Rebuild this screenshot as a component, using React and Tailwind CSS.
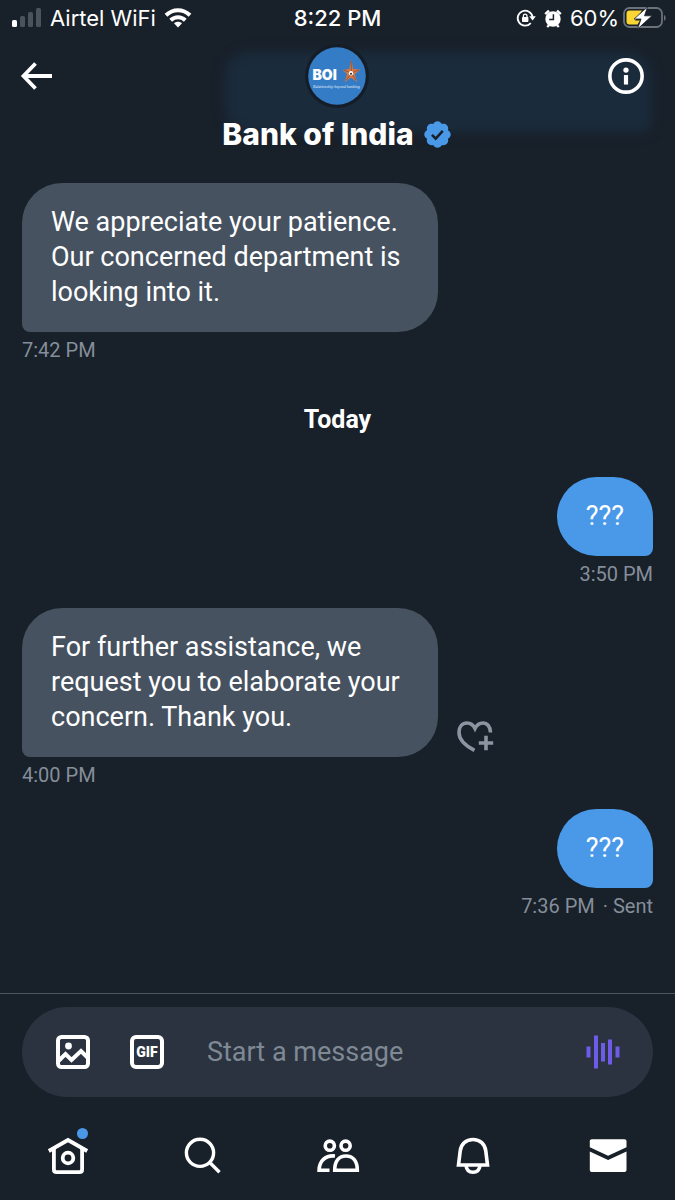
import React, { useState } from "react";

const MESSAGES = [
  { id: 1, from: "them", text: "We appreciate your patience. Our concerned department is looking into it.", time: "7:42 PM" },
  { id: 2, day: "Today" },
  { id: 3, from: "me", text: "???", time: "3:50 PM" },
  { id: 4, from: "them", text: "For further assistance, we request you to elaborate your concern. Thank you.", time: "4:00 PM", react: true },
  { id: 5, from: "me", text: "???", time: "7:36 PM", status: "Sent" },
];

const TABS = [
  { name: "Home", icon: HomeIcon, badge: true },
  { name: "Search", icon: SearchIcon },
  { name: "Communities", icon: PeopleIcon },
  { name: "Notifications", icon: BellIcon },
  { name: "Messages", icon: MailIcon },
];

export default function App() {
  return (
    <div className="min-h-screen flex flex-col bg-[#18202a] text-white font-[Roboto,sans-serif]">
      <StatusBar />
      <ChatHeader />
      <main className="flex-1 flex flex-col px-[22px] pt-[18px] pb-4">
        {MESSAGES.map((m) =>
          m.day ? (
            <h2 key={m.id} className="text-center text-[25px] leading-8 font-bold mt-5 mb-[41px]">{m.day}</h2>
          ) : (
            <Message key={m.id} message={m} />
          )
        )}
      </main>
      <Composer />
      <TabBar />
    </div>
  );
}

function StatusBar() {
  return (
    <div className="relative flex items-center justify-between h-9 pl-3 pr-2 text-[22px] leading-7 font-[Inter,sans-serif]">
      <div className="flex items-center gap-2">
        <svg width="30" height="20" viewBox="0 0 30 20" aria-hidden="true">
          <rect x="0" y="12" width="5" height="7" rx="1.5" fill="#fff" />
          <rect x="8" y="8" width="5" height="11" rx="1.5" fill="#4a525b" />
          <rect x="16" y="4" width="5" height="15" rx="1.5" fill="#4a525b" />
          <rect x="24" y="0" width="5" height="19" rx="1.5" fill="#4a525b" />
        </svg>
        <span>Airtel WiFi</span>
        <svg width="28" height="20" viewBox="0 0 28 20" fill="none" stroke="#fff" strokeWidth="4" aria-hidden="true">
          <path d="M2 7.3C9 .6 19 .6 26 7.3" />
          <path d="M6.7 12.2C11 8.2 17 8.2 21.3 12.2" />
          <path d="M14 19.5l-4-4.2c2.3-2 5.7-2 8 0z" fill="#fff" stroke="none" />
        </svg>
      </div>
      <span className="absolute left-1/2 -translate-x-1/2 font-medium">8:22 PM</span>
      <div className="flex items-center gap-2">
        <svg width="20" height="20" viewBox="0 0 20 20" fill="none" stroke="#fff" strokeWidth="1.8" aria-hidden="true">
          <path d="M14.8 15.2A7.5 7.5 0 1 1 16.6 9" />
          <path d="M13.2 8.3h6.6L16.6 12.5z" fill="#fff" stroke="none" />
          <rect x="6" y="9" width="6.4" height="5" rx=".8" fill="#fff" stroke="none" />
          <path d="M7.4 9.5V8a1.8 1.8 0 0 1 3.6 0v1.5" strokeWidth="1.3" />
        </svg>
        <svg width="18" height="19" viewBox="0 0 18 19" aria-hidden="true">
          <circle cx="9" cy="10" r="7.7" fill="#fff" />
          <path d="M1.2 5.2L5 1.6M16.8 5.2L13 1.6M3.2 18l2-2M14.8 18l-2-2" stroke="#fff" strokeWidth="2.4" />
          <path d="M9.4 5.2V10.4H5.2" stroke="#18202a" strokeWidth="1.5" fill="none" />
        </svg>
        <span>60%</span>
        <svg className="-ml-1" width="44" height="24" viewBox="0 0 44 24" aria-hidden="true">
          <rect x="1" y="2" width="38" height="19" rx="5.5" fill="none" stroke="#6b727a" strokeWidth="1.8" />
          <path d="M41 9c2.2.8 2.2 5 0 5.8z" fill="#6b727a" />
          <path d="M6.5 4.500H19L12 14.500H17L14.500 18.500H6.500a3 3 0 0 1-3-3v-8a3 3 0 0 1 3-3z" fill="#fbd534" />
          <path d="M24.500 1L11 13h7L14.500 23 29 9.800h-7.500z" fill="#fff" stroke="#18202a" strokeWidth=".8" />
        </svg>
      </div>
    </div>
  );
}

function ChatHeader() {
  return (
    <header className="relative flex items-start justify-between px-5 pt-2 pb-[11px]">
      {/* message scrolled under the translucent header */}
      <div className="absolute left-1/3 right-6 top-4 h-20 rounded-3xl rounded-br-lg bg-[#1a2b3c] blur-[6px]" />
      <button className="relative mt-3 w-12" aria-label="Back">
        <svg width="34" height="40" viewBox="0 0 34 40" fill="none" stroke="#fff" strokeWidth="3.8">
          <path d="M32 20H4M15.5 7.500L3.500 20l12 12.500" />
        </svg>
      </button>
      <div className="relative flex flex-col items-center">
        <Avatar />
        <h1 className="flex items-center gap-2 mt-1.5 text-[30px] leading-10 font-extrabold font-[Inter,sans-serif]">
          Bank of India
          <VerifiedBadge />
        </h1>
      </div>
      <button className="relative mt-3 w-12 flex justify-end" aria-label="Conversation info">
        <svg className="mr-2.5" width="40" height="40" viewBox="0 0 40 40">
          <circle cx="20" cy="20" r="17" fill="none" stroke="#fff" strokeWidth="3.8" />
          <circle cx="20" cy="13.800" r="2.800" fill="#fff" />
          <rect x="17.800" y="19" width="4.400" height="10" fill="#fff" />
        </svg>
      </button>
    </header>
  );
}

function Avatar() {
  return (
    <svg width="64" height="64" viewBox="0 0 64 64" role="img" aria-label="BOI">
      <circle cx="32" cy="32" r="32" fill="#151d29" />
      <circle cx="32" cy="32" r="28.800" fill="#347dc6" />
      <text x="7.500" y="36" fontSize="14" fontWeight="900" fill="#fff" fontFamily="Inter, sans-serif">BOI</text>
      <path d="M46.300 15.500l1.900 9.500 7.300.6-5.900 4.600 2.600 7.800-6.200-4.600-6.300 4.600 2.400-8-4.400-4 6.600-1z" fill="#d9763f" />
      <path d="M46.300 17v12l-5 7M54 26l-7.700 3 4.500 7M39 26.200l7.300 2.800" stroke="#7a4a3c" strokeWidth=".7" fill="none" />
      <circle cx="46" cy="29.300" r="2.200" fill="#fff" />
      <circle cx="46" cy="29.800" r="1" fill="#20242c" />
      <text x="8" y="44" fontSize="4" fontStyle="italic" fill="#e6f0fa" fontFamily="Liberation Serif, serif">Relationship beyond banking</text>
    </svg>
  );
}

function VerifiedBadge() {
  return (
    <svg width="31" height="31" viewBox="0 0 24 24" aria-label="Verified">
      <path
        fill="#4a99e9"
        d="M22.250 12c0-1.430-.88-2.670-2.190-3.340.46-1.390.2-2.900-.81-3.910s-2.520-1.270-3.910-.81c-.66-1.310-1.910-2.190-3.340-2.190s-2.670.88-3.330 2.190c-1.400-.46-2.910-.2-3.920.81s-1.260 2.520-.8 3.910c-1.310.67-2.200 1.910-2.200 3.340s.89 2.670 2.200 3.340c-.46 1.390-.21 2.900.8 3.910s2.520 1.260 3.910.81c.67 1.310 1.910 2.190 3.340 2.190s2.680-.88 3.340-2.190c1.390.45 2.900.2 3.910-.81s1.270-2.520.81-3.910c1.310-.67 2.190-1.910 2.190-3.340z"
      />
      <path d="M7.700 12.300l2.900 2.900 5.500-6" fill="none" stroke="#18202a" strokeWidth="2" />
    </svg>
  );
}

function Message({ message }) {
  const mine = message.from === "me";
  return (
    <div className={`flex flex-col mb-[22px] ${mine ? "items-end" : "items-start"}`}>
      <div className="flex items-end gap-[18px] w-full">
        <p
          className={`px-[29px] pt-[22px] pb-[22px] text-[27px] leading-[35px] ${
            mine
              ? "ml-auto bg-[#4a99e9] rounded-[40px] rounded-br-lg"
              : "max-w-[66%] bg-[#465260] rounded-[40px] rounded-bl-lg"
          }`}
        >
          {message.text}
        </p>
        {message.react && (
          <button aria-label="Add reaction">
            <HeartPlusIcon />
          </button>
        )}
      </div>
      <div className="mt-1.5 text-xl leading-6 text-[#858e99]">
        {message.time}
        {message.status && <span className="ml-2">· {message.status}</span>}
      </div>
    </div>
  );
}

function Composer() {
  const [text, setText] = useState("");
  return (
    <form className="border-t border-[#4d5560] px-[22px] pt-[13px]" onSubmit={(e) => e.preventDefault()}>
      <div className="flex items-center h-[90px] rounded-full bg-[#2a333f] pl-[34px] pr-8">
        <button type="button" className="mr-10" aria-label="Add photo">
          <ImageIcon />
        </button>
        <button
          type="button"
          className="flex items-center justify-center size-[34px] shrink-0 rounded-md border-4 border-white text-sm leading-none font-black"
        >
          GIF
        </button>
        <input
          className="flex-1 min-w-0 ml-[43px] bg-transparent outline-none text-[27px] leading-9 placeholder:text-[#7f8994]"
          placeholder="Start a message"
          aria-label="Start a message"
          value={text}
          onChange={(e) => setText(e.target.value)}
        />
        <button type="button" aria-label="Record voice message">
          <svg width="36" height="36" viewBox="0 0 36 36" fill="#6e5be8">
            <rect x="1.500" y="12.500" width="4" height="11" />
            <rect x="9" y="1.500" width="4" height="33" />
            <rect x="16" y="9" width="4" height="18.500" />
            <rect x="23" y="5.500" width="4" height="25" />
            <rect x="30.500" y="12.500" width="4" height="11" />
          </svg>
        </button>
      </div>
    </form>
  );
}

function TabBar() {
  return (
    <nav className="flex pt-[37px] pb-[22px]">
      {TABS.map(({ name, icon: Icon, badge }) => (
        <a key={name} href={`#${name.toLowerCase()}`} aria-label={name} className="flex-1 flex justify-center">
          <span className="relative">
            <Icon />
            {badge && <span className="absolute -top-1.5 right-0.5 size-[11px] rounded-full bg-[#4a99e9]" />}
          </span>
        </a>
      ))}
    </nav>
  );
}

function HeartPlusIcon() {
  return (
    <svg width="38" height="38" viewBox="0 0 38 38" fill="none" stroke="#8b95a1" strokeWidth="3.600">
      <path d="M34.500 13.500C34.500 7.500 31 4 27 4c-4 0-6.500 2.500-8 5.500C17.500 6.500 15 4 11 4 6.500 4 3 7.500 3 13.500 3 21 10 27 18.500 31.300" />
      <path d="M30 16.800v14.400M22.800 24h14.400" />
    </svg>
  );
}

function ImageIcon() {
  return (
    <svg width="34" height="34" viewBox="0 0 34 34" fill="none" stroke="#fff" strokeWidth="4">
      <rect x="2" y="2" width="30" height="30" rx="3.500" />
      <circle cx="12.500" cy="11" r="3.400" fill="#fff" stroke="none" />
      <path d="M2.500 26l7-7 6 6 9.500-9 7 7" />
    </svg>
  );
}

function HomeIcon() {
  return (
    <svg width="44" height="44" viewBox="0 0 44 44" fill="none" stroke="#fff" strokeWidth="3.800">
      <path d="M2.800 17L22 6l19.200 11" />
      <path d="M7.900 15v20.500c0 1.700 1 2.700 2.700 2.700h22.800c1.700 0 2.700-1 2.700-2.700V15" />
      <circle cx="22" cy="24" r="5.300" />
    </svg>
  );
}

function SearchIcon() {
  return (
    <svg width="44" height="44" viewBox="0 0 44 44" fill="none" stroke="#fff" strokeWidth="3.400">
      <circle cx="19" cy="18.800" r="13.600" />
      <path d="M28.500 28.300l10 10" />
    </svg>
  );
}

function PeopleIcon() {
  return (
    <svg width="44" height="44" viewBox="0 0 44 44" fill="none" stroke="#fff" strokeWidth="3.600">
      <circle cx="13.800" cy="11.700" r="4.600" />
      <circle cx="29.600" cy="11.700" r="4.600" />
      <path d="M18.700 36.300C18.700 27 23 22 30 22s11.300 5 11.300 14.300z" />
      <path d="M19 22c-10-.8-15.700 5-15.900 14.300H13.500" />
    </svg>
  );
}

function BellIcon() {
  return (
    <svg width="44" height="44" viewBox="0 0 44 44" fill="none" stroke="#fff" strokeWidth="3.600">
      <path d="M7.500 31L9.200 17C10 10 15 5.500 22 5.500S34 10 34.800 17l1.700 14z" />
      <path d="M15 31.500c.6 4.400 3.300 6.800 7 6.800s6.400-2.400 7-6.800" />
    </svg>
  );
}

function MailIcon() {
  return (
    <svg width="44" height="44" viewBox="0 0 44 44" fill="#fff">
      <path d="M3.800 13.300V7.300c0-1.200.8-2 2-2h32.700c1.200 0 2 .8 2 2v6L22.100 21.800z" />
      <path d="M3.800 17.500l18.300 8.400 18.400-8.400V36c0 1.200-.8 2-2 2H5.800c-1.200 0-2-.8-2-2z" />
    </svg>
  );
}
